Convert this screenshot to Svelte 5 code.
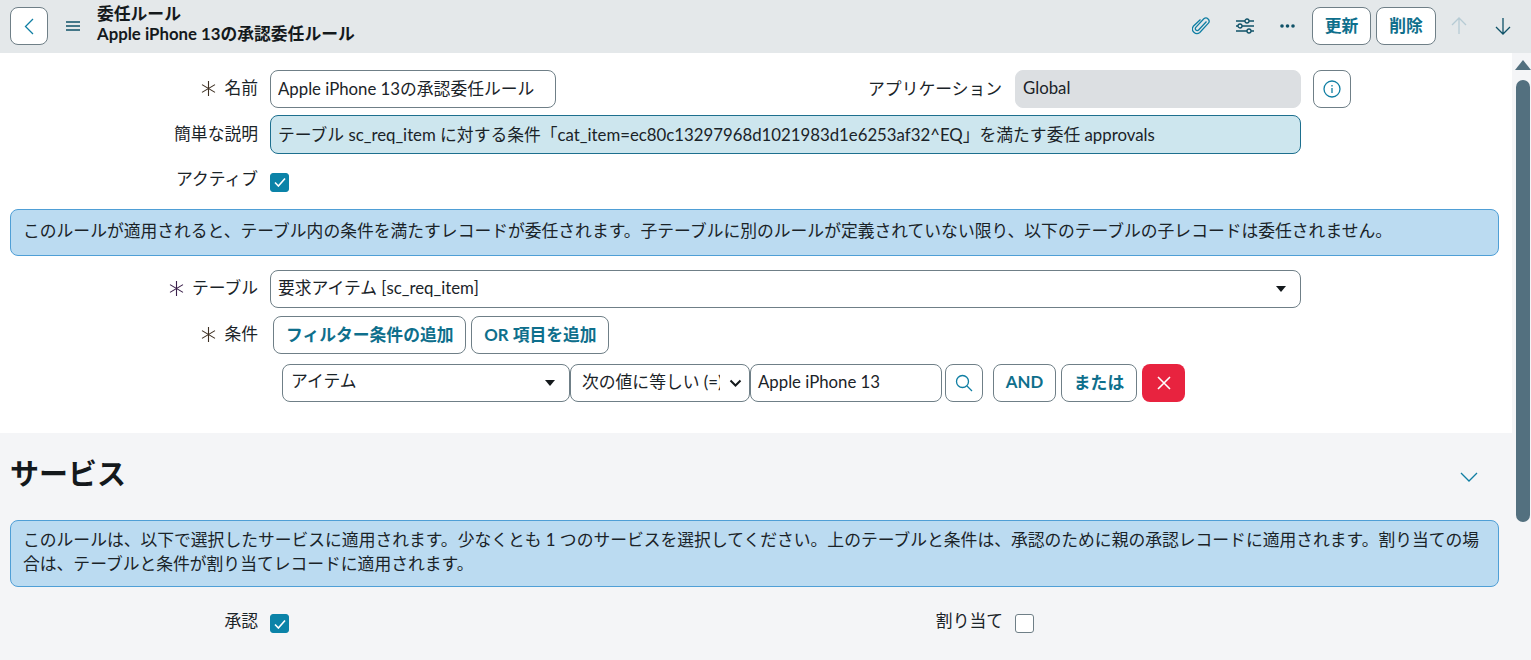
<script lang="ts">
	let name = 'Apple iPhone 13の承認委任ルール';
	let description = 'テーブル sc_req_item に対する条件「cat_item=ec80c13297968d1021983d1e6253af32^EQ」を満たす委任 approvals';
</script>

<svelte:head>
	<title>委任ルール</title>
</svelte:head>

{#snippet req(purple = false)}
	<svg class="req" class:purple width="15" height="15" viewBox="0 0 15 15"><path d="M7.5 0v15M1 3.6l13 7.8M14 3.6 1 11.4" /></svg>
{/snippet}

<div class="page">
	<header class="topbar">
		<button type="button" class="btn back" aria-label="戻る">
			<svg width="10" height="17" viewBox="0 0 10 17"><path d="M9 1 1.5 8.5 9 16" class="ico thin" /></svg>
		</button>
		<svg class="menu" width="14" height="10" viewBox="0 0 14 10"><path d="M0 1h14M0 5h14M0 9h14" class="ico dark thin" /></svg>
		<div class="title">
			<div>委任ルール</div>
			<div>Apple iPhone 13の承認委任ルール</div>
		</div>
		<div class="actions">
			<svg class="tool" width="18" height="20" viewBox="0 0 18 20">
				<path d="M14.5 5.5 6.6 14a1.9 1.9 0 0 1-2.8-2.6l8-8.6a3.2 3.2 0 0 1 4.6 4.4l-8.6 9.2a4.5 4.5 0 0 1-6.5-6.1L8.5 3.6" class="ico thin" />
			</svg>
			<svg class="tool" width="18" height="16" viewBox="0 0 18 16">
				<path d="M0 3h9M13 3h5M0 8h2M6 8h12M0 13h11M15 13h3" class="ico dark thin" />
				<circle cx="11" cy="3" r="2" class="ico dark thin" /><circle cx="4" cy="8" r="2" class="ico dark thin" /><circle cx="13" cy="13" r="2" class="ico dark thin" />
			</svg>
			<svg class="tool dots" width="15" height="4" viewBox="0 0 15 4">
				<circle cx="2" cy="2" r="1.8" /><circle cx="7.5" cy="2" r="1.8" /><circle cx="13" cy="2" r="1.8" />
			</svg>
			<button type="button" class="btn strong update">更新</button>
			<button type="button" class="btn strong remove">削除</button>
			<svg class="arrow up" width="16" height="18" viewBox="0 0 16 18"><path d="M8 17V1M1 8l7-7 7 7" class="ico pale thin" /></svg>
			<svg class="arrow" width="16" height="18" viewBox="0 0 16 18"><path d="M8 1v16M1 10l7 7 7-7" class="ico dark thin" /></svg>
		</div>
	</header>

	<div class="body">
		<main>
			<section class="form">
				<div class="row first">
					<label class="label">{@render req()}名前</label>
					<input class="input name" value={name} />
					<label class="label app">アプリケーション</label>
					<div class="input readonly"><span>Global</span></div>
					<button type="button" class="btn info" aria-label="情報">
						<svg width="18" height="18" viewBox="0 0 18 18">
							<circle cx="9" cy="9" r="8" class="ico thin" />
							<path d="M9 8v5M9 5v1.4" class="ico thin" />
						</svg>
					</button>
				</div>
				<div class="row second">
					<label class="label">簡単な説明</label>
					<div class="input suggest"><span>{description}</span></div>
				</div>
				<div class="row active">
					<label class="label">アクティブ</label>
					<span class="check on"><svg width="12" height="10" viewBox="0 0 12 10"><path d="M1 5.5 4.4 9 11 1.5" /></svg></span>
				</div>
				<div class="note single">このルールが適用されると、テーブル内の条件を満たすレコードが委任されます。子テーブルに別のルールが定義されていない限り、以下のテーブルの子レコードは委任されません。</div>
				<div class="row table">
					<label class="label">{@render req(true)}テーブル</label>
					<div class="input select wide"><span>要求アイテム [sc_req_item]</span><i class="caret"></i></div>
				</div>
				<div class="row cond">
					<label class="label">{@render req()}条件</label>
					<div class="cond-btns">
						<button type="button" class="btn strong">フィルター条件の追加</button>
						<button type="button" class="btn strong or-item">OR 項目を追加</button>
					</div>
				</div>
				<div class="filter">
					<div class="input select field"><span>アイテム</span><i class="caret"></i></div>
					<div class="input select oper"><span class="clip">次の値に等しい (=)</span>
						<svg width="13" height="8" viewBox="0 0 13 8"><path d="M1.5 1.5 6.5 6.5l5-5" /></svg>
					</div>
					<div class="input val"><span>Apple iPhone 13</span></div>
					<button type="button" class="btn search" aria-label="検索">
						<svg width="18" height="18" viewBox="0 0 18 18"><circle cx="7.5" cy="7.5" r="6" class="ico thin" /><path d="m12 12 5 5" class="ico thin" /></svg>
					</button>
					<button type="button" class="btn strong and">AND</button>
					<button type="button" class="btn strong or">または</button>
					<button type="button" class="del" aria-label="削除">
						<svg width="14" height="14" viewBox="0 0 14 14"><path d="m1 1 12 12M13 1 1 13" /></svg>
					</button>
				</div>
			</section>

			<section class="service">
				<div class="svc-head">
					<h2>サービス</h2>
					<svg width="18" height="10" viewBox="0 0 18 10"><path d="m1 1 8 8 8-8" class="ico thin" /></svg>
				</div>
				<div class="note double">このルールは、以下で選択したサービスに適用されます。少なくとも 1 つのサービスを選択してください。上のテーブルと条件は、承認のために親の承認レコードに適用されます。割り当ての場合は、テーブルと条件が割り当てレコードに適用されます。</div>
				<div class="row checks">
					<label class="label">承認</label>
					<span class="check on"><svg width="12" height="10" viewBox="0 0 12 10"><path d="M1 5.5 4.4 9 11 1.5" /></svg></span>
					<label class="label assign">割り当て</label>
					<span class="check"></span>
				</div>
			</section>
		</main>

		<aside class="scroll">
			<i class="tri"></i>
			<i class="thumb"></i>
		</aside>
	</div>
</div>

<style>
	:global(body) {
		margin: 0;
		overflow: hidden;
		background: #fff;
		font-family: Lato, "Noto Sans CJK JP", sans-serif;
		color: #1a2328;
	}

	.page {
		height: 660px;
		display: flex;
		flex-direction: column;
		overflow: hidden;
		font-size: 16.8px;
	}

	.topbar {
		height: 53px;
		flex: none;
		box-sizing: border-box;
		display: flex;
		align-items: center;
		padding: 0 20px 1px 10px;
		background: #e4e8ea;
	}

	.title {
		font-weight: 700;
		font-size: 16.8px;
		line-height: 20px;
		margin: 0 0 4px 17px;
		color: #14191c;
	}

	.menu {
		margin-left: 18px;
	}

	.actions {
		margin-left: auto;
		display: flex;
		align-items: center;
	}

	.tool {
		margin-right: 26px;
	}

	.tool.dots {
		margin-right: 17px;
		fill: #0f5268;
	}

	.ico {
		fill: none;
		stroke: #0f7ea3;
		stroke-width: 1.6;
	}

	.ico.dark {
		stroke: #0f5268;
	}

	.ico.thin {
		stroke-width: 1.3;
	}

	.ico.pale {
		stroke: #b6cbd4;
	}

	.btn {
		box-sizing: border-box;
		height: 38px;
		padding: 0 12px 3px;
		border: 1px solid #6f7f87;
		border-radius: 8px;
		background: #fff;
		font: inherit;
		display: inline-flex;
		align-items: center;
		justify-content: center;
	}

	.btn.strong {
		font-weight: 700;
		color: #0e6f8c;
	}

	.back {
		width: 38px;
		padding: 0;
	}

	.btn.update {
		width: 59px;
		padding: 0 0 3px;
	}

	.btn.remove {
		width: 60px;
		padding: 0 0 3px;
		margin-left: 5px;
	}

	.arrow.up {
		margin-left: 15px;
	}

	.arrow {
		margin-left: 28px;
	}

	.body {
		flex: 1;
		min-height: 0;
		display: flex;
	}

	main {
		flex: 1;
		min-width: 0;
	}

	.scroll {
		width: 19px;
		flex: none;
		box-sizing: border-box;
		padding-left: 3px;
		background: #f4f5f7;
		display: flex;
		flex-direction: column;
		align-items: center;
	}

	.tri {
		margin-top: 7px;
		border-left: 8px solid transparent;
		border-right: 8px solid transparent;
		border-bottom: 10px solid #53707f;
	}

	.thumb {
		width: 14px;
		height: 442px;
		margin-top: 10px;
		border-radius: 7px;
		background: #53707f;
	}

	.form {
		height: 380px;
		box-sizing: border-box;
		padding: 17px 13px 0 10px;
	}

	.row {
		display: flex;
		align-items: center;
	}

	.label {
		width: 248px;
		flex: none;
		text-align: right;
		line-height: 20px;
		padding-bottom: 2px;
	}

	.req {
		fill: none;
		stroke: #3d2f22;
		stroke-width: 1.1;
		margin-right: 8px;
		vertical-align: -2px;
	}

	.req.purple {
		stroke: #3a1f4a;
	}

	.input {
		box-sizing: border-box;
		height: 38px;
		margin-left: 12px;
		padding: 0 7px;
		border: 1px solid #6f7f87;
		border-radius: 8px;
		background: #fff;
		color: #1a2328;
		font: inherit;
		display: flex;
		align-items: center;
		white-space: nowrap;
	}

	.input span {
		position: relative;
		top: -2px;
	}

	input.input {
		padding-bottom: 3px;
	}

	.name {
		width: 286px;
	}

	.label.app {
		width: 446px;
		padding-bottom: 0;
	}

	.readonly {
		width: 286px;
		border-color: #dcdfe2;
		background: #dcdfe2;
		margin-left: 13px;
	}

	.info {
		width: 38px;
		padding: 0;
		margin-left: 12px;
	}

	.second {
		margin-top: 7px;
	}

	.suggest {
		width: 1031px;
		height: 39px;
		background: #cde6ee;
		border-color: #1d6f8e;
	}

	.suggest span {
		top: -1px;
	}

	.active {
		margin-top: 18px;
		height: 20px;
	}

	.active .label {
		padding-bottom: 6px;
	}

	.check {
		box-sizing: border-box;
		width: 19px;
		height: 19px;
		margin-left: 12px;
		margin-top: 3px;
		border: 1px solid #6f7f87;
		border-radius: 3px;
		background: #fff;
		display: inline-flex;
		align-items: center;
		justify-content: center;
	}

	.active .check {
		margin-top: 0;
	}

	.check.on {
		background: #0b83a8;
		border-color: #0b83a8;
	}

	.check svg {
		fill: none;
		stroke: #fff;
		stroke-width: 1.6;
	}

	.note {
		box-sizing: border-box;
		border: 1px solid #4f9fd6;
		border-radius: 8px;
		background: #bbdbf1;
		padding: 0 14px 0 12px;
		line-height: 24px;
		color: #1a2328;
	}

	.single {
		margin-top: 17px;
		height: 47px;
		display: flex;
		align-items: center;
		padding-bottom: 3px;
	}

	.table {
		margin-top: 14px;
	}

	.wide {
		width: 1031px;
	}

	.caret {
		margin-left: auto;
		margin-right: 7px;
		border-left: 5px solid transparent;
		border-right: 5px solid transparent;
		border-top: 6px solid #14191c;
	}

	.cond {
		margin-top: 8px;
	}

	.cond-btns {
		display: flex;
		gap: 5px;
		margin-left: 15px;
	}

	.btn.or-item {
		width: 138px;
		padding: 0 0 3px;
	}

	.filter {
		display: flex;
		align-items: center;
		margin: 10px 0 0 272px;
	}

	.filter .input {
		margin-left: 0;
	}

	.filter .field {
		width: 288px;
		padding-left: 8px;
	}

	.field span {
		top: -3px;
	}

	.filter .oper {
		width: 180px;
		padding-left: 11px;
	}

	.oper .clip {
		width: 138px;
		overflow: hidden;
		flex: none;
	}

	.oper svg {
		margin-left: 9px;
		fill: none;
		stroke: #14191c;
		stroke-width: 2;
	}

	.val {
		width: 192px;
	}

	.search {
		width: 38px;
		padding: 0;
		margin-left: 3px;
	}

	.btn.and {
		width: 63px;
		padding: 0 0 3px;
		margin-left: 10px;
	}

	.btn.or {
		width: 76px;
		padding: 0 0 3px;
		margin-left: 5px;
	}

	.del {
		width: 43px;
		height: 38px;
		margin-left: 5px;
		padding: 0;
		border: 0;
		border-radius: 8px;
		background: #e8233f;
		display: inline-flex;
		align-items: center;
		justify-content: center;
	}

	.del svg {
		fill: none;
		stroke: #fff;
		stroke-width: 1.6;
	}

	.service {
		height: 227px;
		box-sizing: border-box;
		padding: 0 13px 0 10px;
		background: #f4f5f7;
	}

	.svc-head {
		height: 87px;
		display: flex;
		align-items: center;
		justify-content: space-between;
		padding-right: 21px;
	}

	h2 {
		margin: 0 0 6px;
		font-size: 29px;
		line-height: 36px;
		font-weight: 700;
		color: #14191c;
	}

	.double {
		padding-top: 7px;
		height: 67px;
	}

	.checks {
		margin-top: 24px;
		height: 22px;
	}

	.checks .label {
		padding-bottom: 2px;
	}

	.label.assign {
		width: 714px;
	}
</style>
